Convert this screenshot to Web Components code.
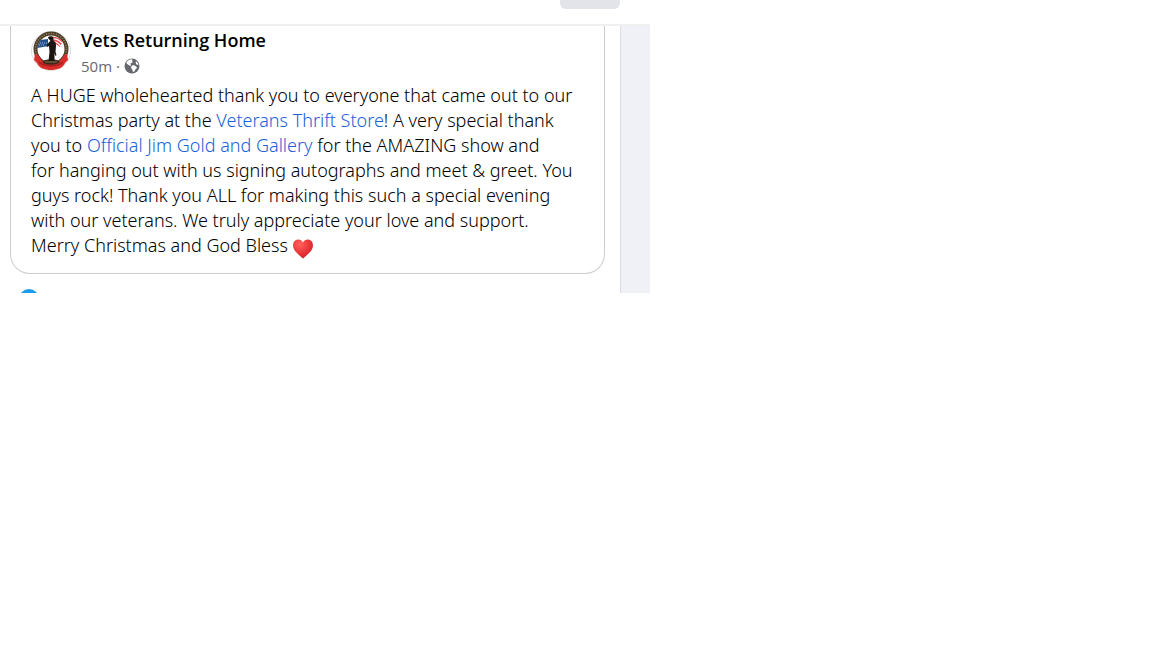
<!DOCTYPE html>
<html lang="en">
<head>
  <meta charset="UTF-8">
  <meta name="viewport" content="width=device-width, initial-scale=1.0">
  <title>Vets Returning Home</title>
  <style>
    body {
      margin: 0;
      background: #ffffff;
      color: #000000;
      font-family: "Open Sans", "Noto Sans", sans-serif;
    }
  </style>
</head>
<body>
  <feed-page>
    <top-bar slot="top"></top-bar>
    <post-card>
      <post-avatar slot="avatar"></post-avatar>
      <span slot="name">Vets Returning Home</span>
      <span slot="time">50m</span>
      A HUGE wholehearted thank you to everyone that came out to our<br>
      Christmas party at the <page-link to="#veterans-thrift-store">Veterans Thrift Store</page-link>! A very special thank<br>
      you to <page-link to="#official-jim-gold">Official Jim Gold and Gallery</page-link> for the AMAZING show and<br>
      for hanging out with us signing autographs and meet &amp; greet. You<br>
      guys rock! Thank you ALL for making this such a special evening<br>
      with our veterans. We truly appreciate your love and support.<br>
      Merry Christmas and God Bless <heart-icon></heart-icon>
    </post-card>
    <reaction-row></reaction-row>
  </feed-page>

  <script>
    class FeedPage extends HTMLElement {
      connectedCallback() {
        this.attachShadow({ mode: "open" });
        this.shadowRoot.innerHTML = `
          <style>
            :host {
              display: block;
              max-width: 650px;
            }

            .columns {
              display: flex;
            }

            main {
              flex: 1;
              min-width: 0;
              padding: 0 15px 0 10px;
            }

            aside {
              flex: 0 0 29px;
              background: #f0f1f6;
              border-left: 1px solid #dcdde1;
            }
          </style>
          <slot name="top"></slot>
          <div class="columns">
            <main><slot></slot></main>
            <aside></aside>
          </div>
        `;
      }
    }

    class TopBar extends HTMLElement {
      connectedCallback() {
        this.attachShadow({ mode: "open" });
        this.shadowRoot.innerHTML = `
          <style>
            :host {
              display: flex;
              justify-content: flex-end;
              align-items: flex-start;
              height: 24px;
              padding-right: 30px;
              border-bottom: 2px solid #f0f0f0;
            }

            button {
              width: 60px;
              height: 9px;
              padding: 0;
              border: none;
              border-radius: 0 0 6px 6px;
              background: #e3e4ea;
              cursor: pointer;
            }
          </style>
          <button type="button" aria-label="Close"></button>
        `;
      }
    }

    class PostCard extends HTMLElement {
      connectedCallback() {
        this.attachShadow({ mode: "open" });
        this.shadowRoot.innerHTML = `
          <style>
            :host {
              display: block;
              padding: 4px 20px 15px;
              border: 1px solid #cccdd0;
              border-top: none;
              border-radius: 0 0 20px 20px;
            }

            header {
              display: flex;
              gap: 10px;
            }

            h2 {
              margin: 0;
              font-size: 18px;
              font-weight: 600;
              line-height: 20px;
            }

            .meta {
              display: flex;
              align-items: center;
              gap: 4px;
              margin-top: 4px;
              color: #65686c;
              font-size: 15px;
              line-height: 24px;
            }

            .meta svg {
              width: 16px;
              height: 16px;
            }

            p {
              margin: 5px 0 0;
              font-family: "Noto Sans", "Open Sans", sans-serif;
              font-size: 18px;
              font-weight: 300;
              line-height: 25px;
            }
          </style>
          <header>
            <slot name="avatar"></slot>
            <div>
              <h2><slot name="name"></slot></h2>
              <div class="meta">
                <slot name="time"></slot>
                <span>·</span>
                <svg viewBox="0 0 16 16" role="img" aria-label="Public">
                  <circle cx="8" cy="8" r="7.5" fill="#65686c"/>
                  <path fill="#ffffff" d="M2.300 4.600C3.500 2.600 5.500 1.300 7.800 1.200c.9.300.6 1.200 0 1.700.8.300 1.200 1 .6 1.700-.6.600-1.500.5-1.900 1.200-.3.700.8 1 .5 1.700-.3.600-1.300.3-1.900-.2-.9-.7-2.200-.8-2.800-2.700z"/>
                  <path fill="#ffffff" d="M8.200 7.600c1-.8 2.400-.5 3.200.3.800.7 1.400.7 1.500 1.600 0 1.200-1.300 1.500-1.800 2.500-.4.900-.9 2-1.900 1.800-.9-.3-.5-1.500-.9-2.300-.4-.8-1.300-1.200-1.200-2.200 0-.7.500-1.300 1.100-1.700z"/>
                  <path fill="#ffffff" d="M12 3.200c1.300.9 2.200 2.100 2.500 3.600-.9.200-1.900-.1-2.300-.9-.5-.9-.8-1.900-.2-2.700z"/>
                </svg>
              </div>
            </div>
          </header>
          <p><slot></slot></p>
        `;
      }
    }

    class PostAvatar extends HTMLElement {
      connectedCallback() {
        this.attachShadow({ mode: "open" });
        this.shadowRoot.innerHTML = `
          <style>
            :host {
              display: block;
              flex: 0 0 40px;
              height: 40px;
              padding-top: 1px;
            }

            svg {
              display: block;
            }
          </style>
          <svg width="40" height="40" viewBox="0 0 40 40" role="img" aria-label="Vets Returning Home">
            <defs>
              <clipPath id="disc"><circle cx="20" cy="18.500" r="14"/></clipPath>
            </defs>
            <circle cx="20" cy="20" r="19.500" fill="#ffffff" stroke="#dedede"/>
            <circle cx="20" cy="18" r="15.500" fill="#ffffff" stroke="#4b3d29" stroke-width="4"/>
            <circle cx="20" cy="18" r="15.500" fill="none" stroke="#a18b5e" stroke-width="1.500" stroke-dasharray="1 1.500"/>
            <!-- flag behind the soldier -->
            <g clip-path="url(#disc)">
              <path d="M6 17l3-8 8-1v7l-5 1z" fill="#23518c"/>
              <path d="M9 12h7M8 14h6" stroke="#c8d6e8" stroke-width=".8" stroke-dasharray="1 1"/>
              <path d="M20 6c4-1 8 1 12 4l-3 6c-3-3-6-4-9-3z" fill="#e8474f"/>
              <path d="M21 8c4-1 7 1 10 4M21 11c4-1 6 1 9 4" stroke="#ffffff" stroke-width="1.200" fill="none"/>
            </g>
            <!-- ribbon -->
            <path d="M4 23l3 1c3 6 8 8 13 8s10-2 13-8l3-1 1 6-3 3c-2 5-8 7-14 7S8 37 6 32l-3-3z" fill="#d92d29"/>
            <path d="M8 31c5 5 19 5 24 0" fill="none" stroke="#a81f20" stroke-width="1.500"/>
            <ellipse cx="20" cy="31" rx="8.500" ry="2.800" fill="#3c2b1d"/>
            <path d="M14 31h12" stroke="#8b7045"/>
            <!-- soldier -->
            <path d="M17 7c0-2 5-2.500 5.500 0v3c2 .5 2.500 2 2.500 5l-.5 6 1 3-1 1-1-3v8h-6l1-9-.5-6-2 1-.5-1c1-2 2-4 4-5z" fill="#1c1612"/>
          </svg>
        `;
      }
    }

    class PageLink extends HTMLElement {
      connectedCallback() {
        this.attachShadow({ mode: "open" });
        this.shadowRoot.innerHTML = `
          <style>
            :host {
              display: inline;
            }

            a {
              color: #1a62d6;
              text-decoration: none;
            }

            a:hover {
              text-decoration: underline;
            }
          </style><a href="${this.getAttribute("to")}"><slot></slot></a>`;
      }
    }

    class HeartIcon extends HTMLElement {
      connectedCallback() {
        this.attachShadow({ mode: "open" });
        this.shadowRoot.innerHTML = `
          <style>
            :host {
              display: inline-block;
              height: 16px;
              vertical-align: middle;
            }

            svg {
              display: block;
            }
          </style>
          <svg width="20" height="20" viewBox="0 0 20 20" role="img" aria-label="Heart">
            <defs>
              <radialGradient id="red" cx=".35" cy=".25" r=".8">
                <stop offset="0" stop-color="#ff625c"/>
                <stop offset=".5" stop-color="#ee3c3e"/>
                <stop offset="1" stop-color="#cf1f27"/>
              </radialGradient>
            </defs>
            <path d="M10 3.500C8.500.2 4.500-.2 2.200 1.600-.5 3.800-.4 7.600 1 10.300c2 3.900 6.500 6.600 9 9.400 2.500-2.800 7-5.500 9-9.400 1.400-2.700 1.500-6.500-1.200-8.700C15.500-.2 11.500.2 10 3.500z" fill="url(#red)"/>
          </svg>
        `;
      }
    }

    class ReactionRow extends HTMLElement {
      connectedCallback() {
        this.attachShadow({ mode: "open" });
        this.shadowRoot.innerHTML = `
          <style>
            :host {
              display: block;
              height: 4px;
              padding: 15px 9px 0;
              overflow: hidden;
            }

            /* only the top of the badge shows above the fold */
            .badge {
              width: 20px;
              height: 20px;
              border-radius: 50%;
              background: #1c9bea;
            }
          </style>
          <div class="badge"></div>
        `;
      }
    }

    customElements.define("feed-page", FeedPage);
    customElements.define("top-bar", TopBar);
    customElements.define("post-card", PostCard);
    customElements.define("post-avatar", PostAvatar);
    customElements.define("page-link", PageLink);
    customElements.define("heart-icon", HeartIcon);
    customElements.define("reaction-row", ReactionRow);
  </script>
</body>
</html>
